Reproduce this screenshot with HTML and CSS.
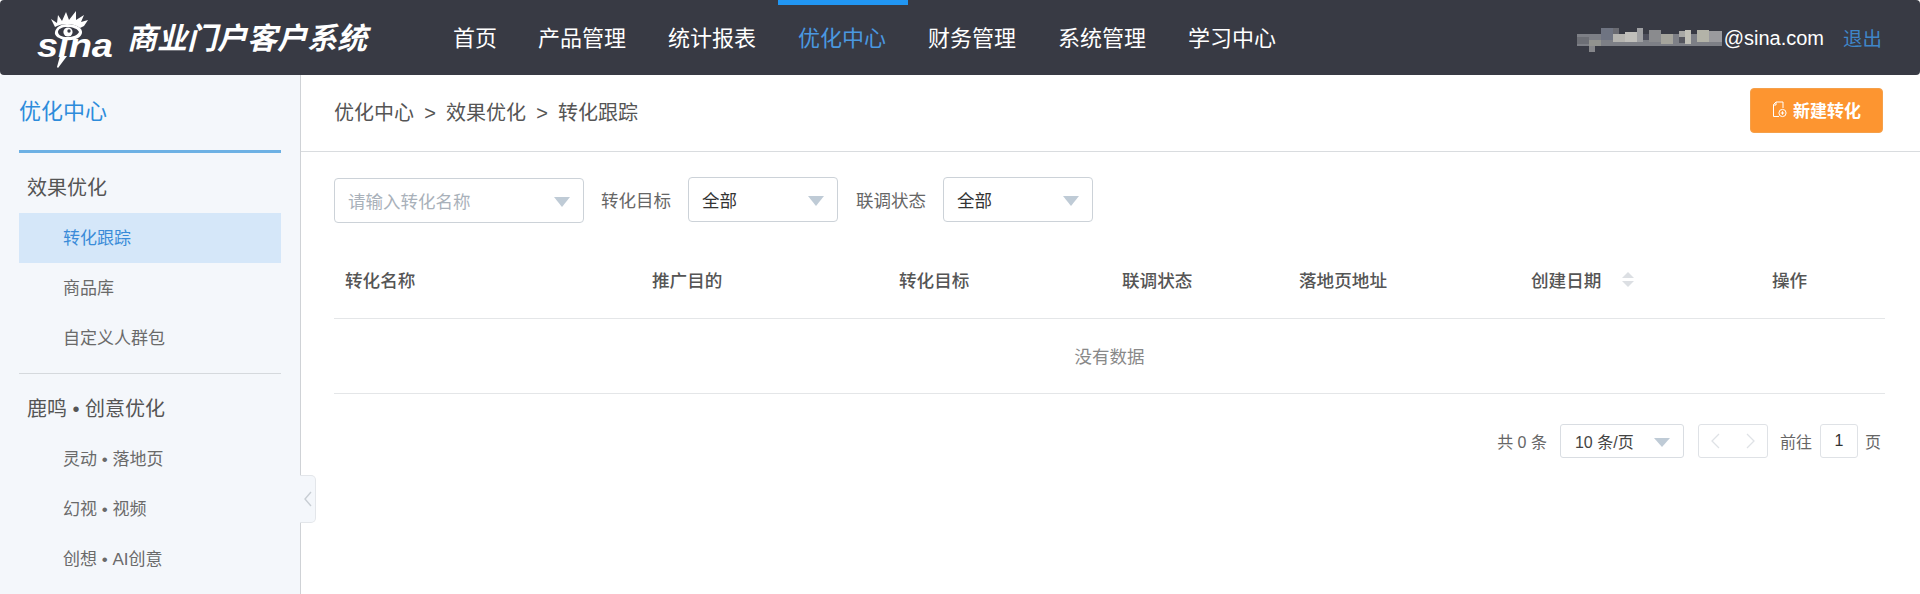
FILE: index.html
```html
<!DOCTYPE html>
<html lang="zh-CN">
<head>
<meta charset="utf-8">
<title>商业门户客户系统</title>
<link rel="stylesheet" href="styles.css">
</head>
<body>
<div class="app">
  <header class="topbar">
    <div class="brand">
      <svg class="logo" width="82" height="62" viewBox="0 0 82 62" aria-label="sina">
        <g fill="#fff">
          <path d="M21 17 L17 9 L23 13 L24 5 L28 11 L32 2 L35 10 L42 1 L42 10 L50 5 L47 12 L54 10 L50 16 L46 18 C40 13 28 13 21 17Z"/>
          <path fill-rule="evenodd" d="M33 14 C42 14 49 18 48 23 C47 28 40 31 32 30 C25 29 20 26 21 22 C22 17 27 14 33 14Z M33 17 C28 17 24 19 24 22 C24 25 28 27 33 27 C39 27 44 25 45 22 C44 19 39 17 33 17Z"/>
          <circle cx="34" cy="22" r="4.6"/>
          <path d="M26 46 L33 46 L24 58 L23 57Z"/>
        </g>
        <circle cx="35" cy="21" r="1.7" fill="#383a44"/>
        <text class="logo-word" x="3" y="47" textLength="76" lengthAdjust="spacingAndGlyphs">sına</text>
      </svg>
      <span class="brand-name">商业门户客户系统</span>
    </div>
    <nav class="mainnav">
      <a class="mainnav-item">首页</a>
      <a class="mainnav-item">产品管理</a>
      <a class="mainnav-item">统计报表</a>
      <a class="mainnav-item is-active">优化中心</a>
      <a class="mainnav-item">财务管理</a>
      <a class="mainnav-item">系统管理</a>
      <a class="mainnav-item">学习中心</a>
    </nav>
    <div class="account">
      <svg class="mosaic" width="146" height="24" viewBox="0 0 146 24" aria-hidden="true">
        <rect x="0" y="6" width="145" height="12" fill="#7d7f86"/>
        <rect x="0" y="9" width="12" height="7" fill="#6c6e75"/>
        <rect x="12" y="12" width="12" height="6" fill="#92938f"/>
        <rect x="24" y="0" width="12" height="12" fill="#6f7482"/>
        <rect x="36" y="0" width="6" height="6" fill="#6a6b72"/>
        <rect x="36" y="6" width="12" height="8" fill="#b5b4b0"/>
        <rect x="48" y="4" width="12" height="10" fill="#c0bfbb"/>
        <rect x="60" y="0" width="6" height="14" fill="#9fa0a3"/>
        <rect x="66" y="6" width="6" height="6" fill="#4d4f5c"/>
        <rect x="72" y="2" width="12" height="12" fill="#8a8b8e"/>
        <rect x="84" y="6" width="12" height="10" fill="#a5a49c"/>
        <rect x="102" y="3" width="6" height="6" fill="#a8a8a6"/>
        <rect x="102" y="9" width="6" height="6" fill="#55565f"/>
        <rect x="108" y="2" width="6" height="14" fill="#c1c0b8"/>
        <rect x="120" y="2" width="12" height="12" fill="#b3b3a8"/>
        <rect x="132" y="3" width="13" height="11" fill="#9a9a9e"/>
        <rect x="12" y="18" width="6" height="6" fill="#85868a"/>
      </svg>
      <span class="account-mail">@sina.com</span>
      <a class="logout">退出</a>
    </div>
  </header>
  <div class="body">
    <aside class="sidebar">
      <h2 class="side-title">优化中心</h2>
      <section class="side-group">
        <h3 class="side-head">效果优化</h3>
        <a class="side-item is-active">转化跟踪</a>
        <a class="side-item">商品库</a>
        <a class="side-item">自定义人群包</a>
      </section>
      <section class="side-group side-group-next">
        <h3 class="side-head">鹿鸣 • 创意优化</h3>
        <a class="side-item">灵动 • 落地页</a>
        <a class="side-item">幻视 • 视频</a>
        <a class="side-item">创想 • AI创意</a>
      </section>
      <button class="collapse" aria-label="收起">
        <svg width="8" height="16" viewBox="0 0 8 16"><path d="M7 1 L1 8 L7 15" fill="none" stroke="#c8ced4" stroke-width="1.4"/></svg>
      </button>
    </aside>
    <main class="content">
      <div class="crumbbar">
        <div class="crumbs"><span>优化中心</span><span class="crumb-sep">&gt;</span><span>效果优化</span><span class="crumb-sep">&gt;</span><span>转化跟踪</span></div>
        <button class="btn-new">
          <svg width="15" height="17" viewBox="0 0 15 17" fill="none" stroke="#fff" stroke-width="1"><path d="M7 15.5 H1.5 V3.5 L4 1 H11 V7"/><path d="M4 1 V4 H1.5"/><circle cx="10.5" cy="12" r="3.6"/><path d="M8.8 12 H12.2 M10.5 10.3 V13.7"/></svg>
          新建转化
        </button>
      </div>
      <div class="filters">
        <div class="field field-name"><span class="placeholder">请输入转化名称</span><i class="caret"></i></div>
        <label class="filter-label">转化目标</label>
        <div class="field field-select"><span>全部</span><i class="caret"></i></div>
        <label class="filter-label">联调状态</label>
        <div class="field field-select"><span>全部</span><i class="caret"></i></div>
      </div>
      <div class="table">
        <div class="t-row t-head">
          <div>转化名称</div>
          <div>推广目的</div>
          <div>转化目标</div>
          <div>联调状态</div>
          <div>落地页地址</div>
          <div class="t-sort">创建日期<span class="sorter"><i class="sort-up"></i><i class="sort-down"></i></span></div>
          <div class="t-center">操作</div>
        </div>
        <div class="t-empty">没有数据</div>
      </div>
      <div class="pager">
        <span>共 0 条</span>
        <div class="pg-size"><span>10 条/页</span><i class="caret caret-sm"></i></div>
        <div class="pg-nav">
          <svg width="9" height="16" viewBox="0 0 9 16"><path d="M8 1 L1 8 L8 15" fill="none" stroke="#dfe2e6" stroke-width="1.3"/></svg>
          <svg width="9" height="16" viewBox="0 0 9 16"><path d="M1 1 L8 8 L1 15" fill="none" stroke="#dfe2e6" stroke-width="1.3"/></svg>
        </div>
        <span class="pg-goto">前往</span>
        <div class="pg-input">1</div>
        <span>页</span>
      </div>
    </main>
  </div>
</div>
</body>
</html>
```

FILE: styles.css
```css
* { box-sizing: border-box; }
html, body { margin: 0; height: 100%; }
body {
  font-family: "Liberation Sans", "Noto Sans CJK SC", sans-serif;
  color: #555;
  background: #fff;
  overflow: hidden;
}
h2, h3 { margin: 0; font-weight: 400; }
.app { height: 594px; display: flex; flex-direction: column; overflow: hidden; }

/* top bar */
.topbar {
  height: 75px;
  flex: none;
  background: #383a44;
  border-radius: 4px;
  display: flex;
  align-items: stretch;
  color: #fff;
}
.brand { width: 432px; padding-left: 34px; display: flex; align-items: flex-start; }
.logo { margin-top: 10px; flex: none; }
.logo-word { font: italic 700 34px "Liberation Sans", sans-serif; fill: #fff; }
.brand-name {
  margin: 15px 0 0 11px;
  font-size: 30px;
  line-height: 48px;
  font-weight: 700;
  font-style: italic;
  white-space: nowrap;
}
.mainnav { display: flex; }
.mainnav-item {
  width: 130px;
  padding-right: 2px;
  text-align: center;
  font-size: 22px;
  line-height: 68px;
  border-top: 5px solid transparent;
  height: 75px;
}
.mainnav-item:first-child { width: 86px; padding-right: 0; }
.mainnav-item.is-active { color: #4a98e0; border-top-color: #2196f3; }
.account {
  margin-left: auto;
  padding-right: 38px;
  display: flex;
  align-items: center;
}
.mosaic { margin-top: 4px; filter: blur(0.7px); }
.account-mail { font: 20px/1 "Liberation Sans", sans-serif; margin-left: 1px; color: #fff; }
.logout { margin-left: 19px; font-size: 19.5px; color: #3f86c8; }

/* layout */
.body { flex: 1; display: flex; min-height: 0; }
.sidebar {
  width: 301px;
  flex: none;
  position: relative;
  background: #f4f7fb;
  border-right: 1px solid #cfd2d6;
  padding: 0 19px;
}
.side-title {
  height: 78px;
  border-bottom: 3px solid #6db1e4;
  font-size: 22px;
  line-height: 73px;
  color: #2d8cdb;
}
.side-head {
  height: 60px;
  padding-left: 8px;
  font-size: 20px;
  line-height: 71px;
  color: #555;
}
.side-item {
  display: block;
  height: 50px;
  padding-left: 44px;
  font-size: 17px;
  line-height: 51px;
  color: #6a6a6a;
}
.side-item.is-active { background: #d5e7f9; color: #3a8bd8; }
.side-group-next { margin-top: 10px; border-top: 1px solid #d5d9dd; }
.collapse {
  position: absolute;
  left: 300px;
  top: 400px;
  width: 16px;
  height: 48px;
  padding: 0;
  background: #f4f7fb;
  border: 1px solid #e3e6ea;
  border-left: 0;
  border-radius: 0 5px 5px 0;
  display: flex;
  align-items: center;
  justify-content: center;
}

/* content */
.content { flex: 1; min-width: 0; }
.crumbbar {
  height: 77px;
  border-bottom: 1px solid #d9dcdf;
  padding: 13px 37px 0 33px;
  display: flex;
  justify-content: space-between;
  align-items: flex-start;
}
.crumbs { font-size: 20px; line-height: 50px; height: 50px; display: flex; color: #555; }
.crumb-sep { width: 32px; text-align: center; }
.btn-new {
  width: 133px;
  height: 45px;
  padding: 0 0 2px;
  border: 1px solid #f5a04a;
  border-radius: 4px;
  background: #fd9530;
  color: #fff;
  font: 700 17px "Noto Sans CJK SC", sans-serif;
  display: flex;
  align-items: center;
  justify-content: center;
  gap: 6px;
}
.filters {
  height: 45px;
  margin: 25px 0 0 33px;
  display: flex;
  align-items: center;
  font-size: 17.5px;
}
.field {
  height: 45px;
  border: 1px solid #ccd2d8;
  border-radius: 4px;
  display: flex;
  align-items: center;
  justify-content: space-between;
  padding: 0 13px;
  color: #333;
  background: #fff;
}
.field-name { width: 250px; margin-top: 2px; }
.field-select { width: 150px; }
.placeholder { color: #a9b1ba; }
.filter-label { margin: 0 17px; color: #666; }
.field-select + .filter-label { margin-left: 18px; }
.caret {
  width: 0;
  height: 0;
  border-left: 8px solid transparent;
  border-right: 8px solid transparent;
  border-top: 10px solid #bfcbd6;
  margin-top: 3px;
}
.caret-sm { border-top-width: 9px; }

/* table */
.table { margin: 0 35px 0 33px; }
.t-row {
  display: grid;
  grid-template-columns: 307px 247px 223px 177px 232px 174px 191px;
}
.t-head {
  height: 97px;
  align-items: center;
  padding-top: 18px;
  border-bottom: 1px solid #e4e6e8;
  font-size: 17.6px;
  font-weight: 500;
  color: #555;
}
.t-head > div { padding-left: 11px; }
.t-head > .t-center { padding-left: 0; text-align: center; }
.t-sort { display: flex; align-items: center; }
.sorter { margin-left: 21px; display: flex; flex-direction: column; gap: 3px; }
.sort-up, .sort-down {
  width: 0;
  height: 0;
  border-left: 6px solid transparent;
  border-right: 6px solid transparent;
}
.sort-up { border-bottom: 6px solid #dcdfe3; }
.sort-down { border-top: 6px solid #dcdfe3; }
.t-empty {
  height: 75px;
  border-bottom: 1px solid #e4e6e8;
  text-align: center;
  font-size: 17.5px;
  line-height: 77px;
  color: #888;
}
.pager {
  height: 34px;
  margin: 30px 39px 0 0;
  display: flex;
  justify-content: flex-end;
  align-items: center;
  font-size: 16px;
  color: #666;
}
.pg-size {
  width: 124px;
  height: 34px;
  margin-left: 13px;
  padding: 0 13px 0 14px;
  border: 1px solid #d9dde2;
  border-radius: 3px;
  display: flex;
  align-items: center;
  justify-content: space-between;
  color: #444;
}
.pg-nav {
  width: 70px;
  height: 34px;
  margin-left: 14px;
  border: 1px solid #dfe2e6;
  border-radius: 3px;
  display: flex;
  align-items: center;
  justify-content: center;
  gap: 26px;
}
.pg-goto { margin-left: 12px; }
.pg-input {
  width: 38px;
  height: 34px;
  margin: 0 7px 0 8px;
  border: 1px solid #dfe2e6;
  border-radius: 3px;
  color: #333;
  text-align: center;
  line-height: 32px;
}
```
